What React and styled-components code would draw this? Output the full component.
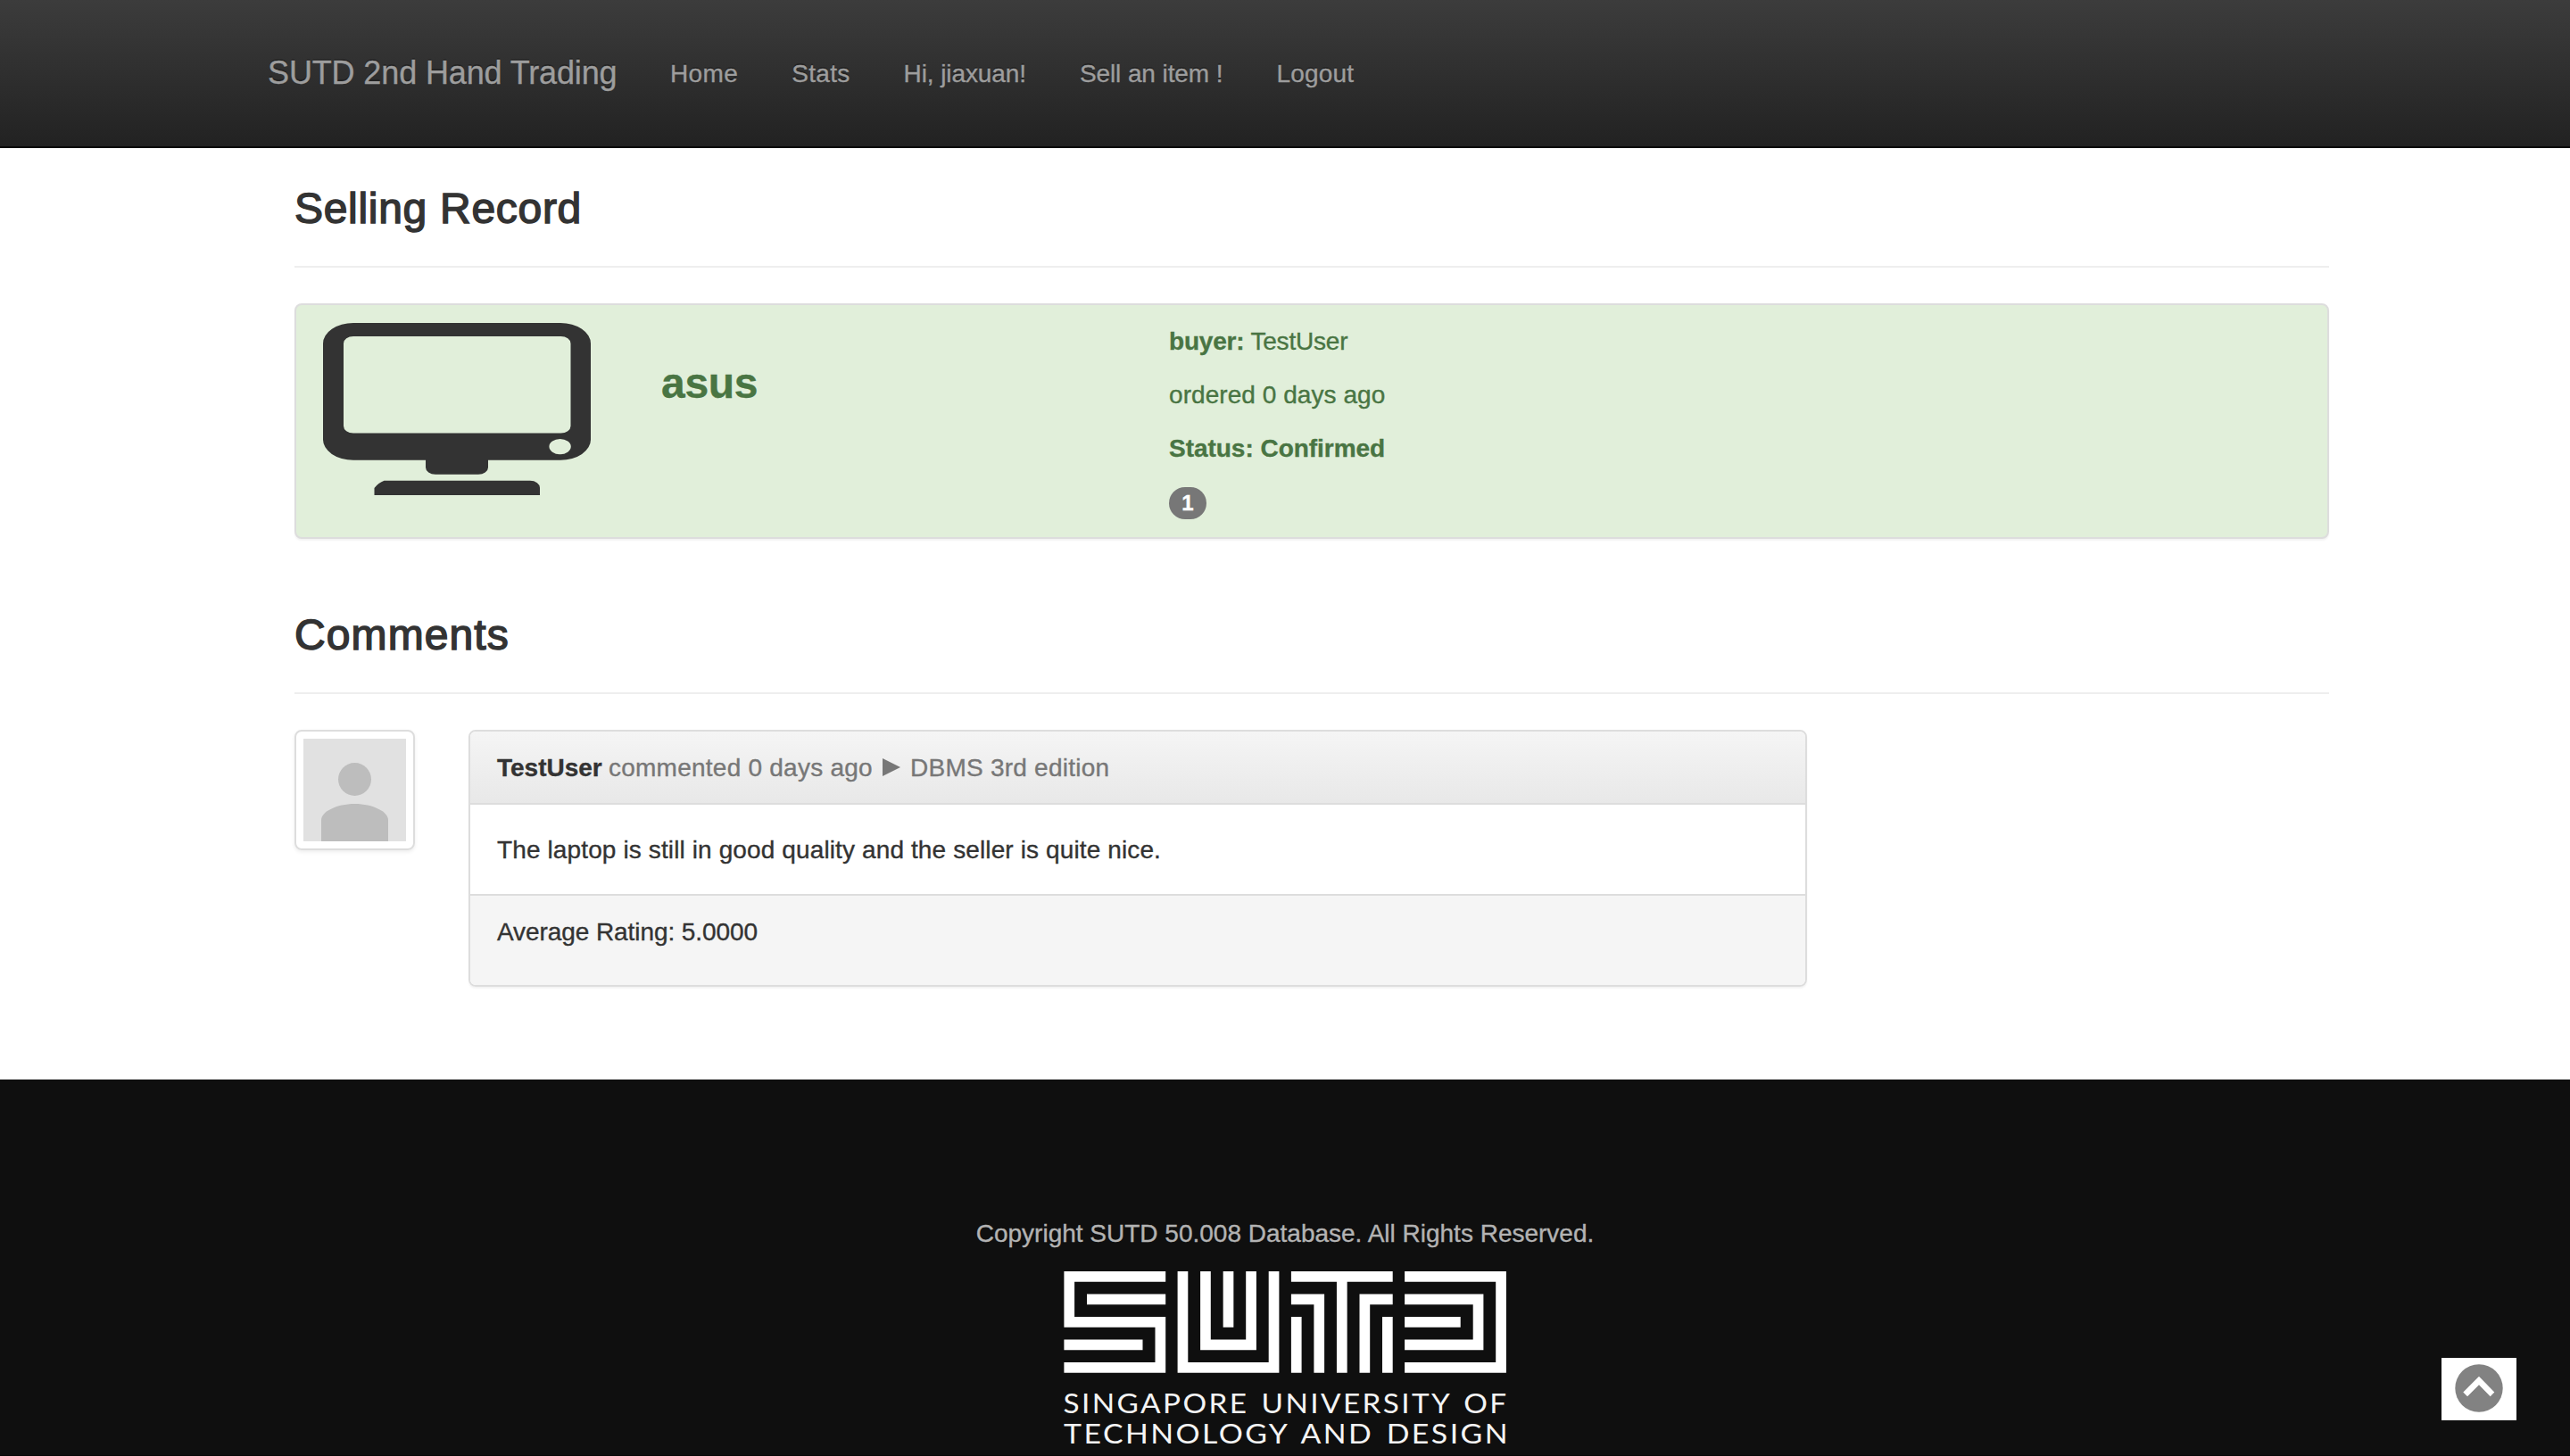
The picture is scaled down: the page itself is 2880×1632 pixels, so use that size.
import React from 'react';
import styled, { createGlobalStyle } from 'styled-components';

const GlobalStyle = createGlobalStyle`
  *, *::before, *::after { box-sizing: border-box; }
  html { background: #0f0f0f; }
  body {
    margin: 0;
    height: 1632px;
    overflow: hidden;
    background: #fff;
    color: #333;
    font: 28px/40px "Helvetica Neue", "Liberation Sans", Arial, sans-serif;
    -webkit-text-stroke: 0.35px currentColor;
  }
  p, h3 { margin: 0; }
`;

const Page = styled.div`
  display: flex;
  flex-direction: column;
  height: 1632px;
`;

const Navbar = styled.nav`
  display: flex;
  flex: none;
  height: 166px;
  padding: 0 270px;
  background: linear-gradient(to bottom, #3c3c3c 0%, #222 100%);
  border-bottom: 2px solid #080808;
`;

const Brand = styled.a`
  width: 451px;
  padding: 62px 0 62px 30px;
  font-size: 36px;
  line-height: 40px;
  white-space: nowrap;
  letter-spacing: -0.13px;
  color: #9d9d9d;
  text-shadow: 0 -2px 0 rgba(0, 0, 0, 0.25);
`;

const NavList = styled.div`
  display: flex;
`;

const NavLink = styled.a`
  padding: 63px 30px 61px;
  letter-spacing: ${(p) => p.$track || 0}px;
  white-space: nowrap;
  color: #9d9d9d;
  text-shadow: 0 -2px 0 rgba(0, 0, 0, 0.25);
`;

const Main = styled.main`
  flex: none;
  height: 1044px;
  width: 2280px;
  margin-left: 330px;
`;

const SectionTitle = styled.h3`
  height: ${(p) => p.$height}px;
  padding-top: ${(p) => p.$top}px;
  border-bottom: 2px solid #eee;
  font-size: 48px;
  line-height: 54px;
  font-weight: 400;
  -webkit-text-stroke: 1.5px #333;
  letter-spacing: ${(p) => p.$track || 0}px;
`;

const RecordCard = styled.section`
  display: grid;
  grid-template-columns: 379px 569px 1fr;
  height: 264px;
  margin-top: 40px;
  padding: 20px 0 0 30px;
  border: 2px solid #ddd;
  border-radius: 8px;
  background: #e1efda;
  color: #497543;
  box-shadow: 0 2px 2px rgba(0, 0, 0, 0.05);
`;

const ItemName = styled.strong`
  padding-top: 41px;
  font-size: 48px;
  line-height: 54px;
  letter-spacing: -0.3px;
`;

const Details = styled.div`
  display: flex;
  flex-direction: column;
  align-items: flex-start;
  gap: 20px;
  padding-top: 1px;
`;

const Line = styled.p`
  letter-spacing: ${(p) => p.$track || 0}px;
`;

const Badge = styled.span`
  width: 42px;
  height: 36px;
  margin-top: 3px;
  border-radius: 20px;
  background: #777;
  color: #fff;
  font-size: 24px;
  font-weight: 700;
  line-height: 36px;
  text-align: center;
`;

const CommentRow = styled.section`
  display: flex;
  align-items: flex-start;
  gap: 60px;
  margin-top: 40px;
`;

const Thumbnail = styled.div`
  display: flex;
  width: 135px;
  height: 135px;
  padding: 8px;
  border: 2px solid #ddd;
  border-radius: 8px;
  box-shadow: 0 2px 4px rgba(0, 0, 0, 0.075);
`;

const Panel = styled.article`
  width: 1500px;
  border: 2px solid #ddd;
  border-radius: 8px;
  overflow: hidden;
  box-shadow: 0 2px 2px rgba(0, 0, 0, 0.05);
`;

const PanelHeading = styled.header`
  display: flex;
  height: 82px;
  padding: 21px 30px 19px;
  border-bottom: 2px solid #ddd;
  background: linear-gradient(to bottom, #f5f5f5 0%, #e8e8e8 100%);
  color: #777;
  white-space: pre;
`;

const Author = styled.strong`
  width: 125px;
  color: #333;
`;

const When = styled.span`
  width: 307px;
  letter-spacing: 0.24px;
`;

const Arrow = styled.svg`
  width: 20px;
  height: 20px;
  margin: 9px 11px 0 0;
`;

const Product = styled.span`
  letter-spacing: 0.24px;
`;

const PanelBody = styled.div`
  height: 100px;
  padding: 31px 30px 29px;
  letter-spacing: 0.12px;
`;

const PanelFooter = styled.footer`
  height: 102px;
  padding: 21px 30px;
  border-top: 2px solid #ddd;
  background: #f5f5f5;
  letter-spacing: -0.08px;
`;

const SiteFooter = styled.footer`
  display: flex;
  flex: 1;
  flex-direction: column;
  align-items: center;
  padding-top: 153px;
  background: #0f0f0f;
  color: #b3b3b3;
  border-bottom: 1px solid #070707;
`;

const Copyright = styled.p`
  white-space: nowrap;
`;

const Logo = styled.svg`
  flex: none;
  width: 500px;
  height: 200px;
  margin-top: 22px;
`;

const LogoText = styled.text`
  font: 400 30.5px Lato, sans-serif;
  letter-spacing: 2.2px;
  word-spacing: 3px;
  -webkit-text-stroke: 0;
  fill: #f4f4f4;
`;

const ToTop = styled.button`
  position: fixed;
  right: 60px;
  bottom: 40px;
  width: 84px;
  height: 70px;
  padding: 0;
  border: 0;
  background: #fff;
`;

const links = [
  { label: 'Home', track: 0.4 },
  { label: 'Stats', track: 0.3 },
  { label: 'Hi, jiaxuan!', track: -0.1 },
  { label: 'Sell an item !', track: -0.1 },
  { label: 'Logout', track: 0.2 },
];

function Monitor() {
  return (
    <svg width="300" height="196" viewBox="0 0 300 196">
      <g fill="#333">
        <path
          fillRule="evenodd"
          d="M34 0H266A34 23 0 0 1 300 23V130.5A34 23 0 0 1 266 153.7H185V162A11 7.700 0 0 1 174 169.700H126A11 7.700 0 0 1 115 162V153.700H34A34 23 0 0 1 0 130.500V23A34 23 0 0 1 34 0ZM34 15A11 8 0 0 0 23 23V115.500A11 8 0 0 0 34 123.500H266.500A11 8 0 0 0 277.500 115.500V23A11 8 0 0 0 266.500 15ZM265.600 130A12.200 8.600 0 0 0 265.600 147.200A12.200 8.600 0 0 0 265.600 130Z"
        />
        <path d="M57.500 193V185Q62 179 68.500 176.700H232A11 8 0 0 1 243 185V193Z" />
      </g>
    </svg>
  );
}

function Avatar() {
  return (
    <svg width="115" height="115" viewBox="0 0 115 115">
      <rect width="115" height="115" fill="#e1e1e1" />
      <circle cx="57.500" cy="45.500" r="18.500" fill="#bdbdbd" />
      <path d="M20 115V91C20 82 37 73 57.500 73S95 82 95 91V115Z" fill="#bdbdbd" />
    </svg>
  );
}

function SutdLogo() {
  return (
    <Logo viewBox="0 0 500 200">
      <g fill="none" stroke="#fff" strokeWidth="11.700">
        <path d="M116.200 5.850H8.250V56.850H110.350V107.850H2.400M28 31.350H116.200M2.400 82.350H90.500" />
        <g transform="translate(127.200 0)">
          <path d="M8.250 0V107.850H110.350V0M33.750 0V82.350H84.850V0M59.300 0V62.800" />
        </g>
        <g transform="translate(254.500 0)">
          <path d="M2.400 5.850H116.200M59.300 5.850V113.700M2.400 31.350H33.750V113.700M116.200 31.350H84.850V113.700M8.250 51V113.700M110.350 51V113.700" />
        </g>
        <g transform="translate(381.700 0)">
          <path d="M2.400 5.850H110.350V107.850H2.400M2.400 31.350H84.850V82.350H2.400M2.400 56.850H65" />
        </g>
      </g>
      <LogoText x="1.500" y="158.700" textLength="499" lengthAdjust="spacingAndGlyphs">SINGAPORE UNIVERSITY OF</LogoText>
      <LogoText x="2" y="192.700" textLength="500" lengthAdjust="spacingAndGlyphs">TECHNOLOGY AND DESIGN</LogoText>
    </Logo>
  );
}

export default function App() {
  return (
    <Page>
      <GlobalStyle />
      <Navbar>
        <Brand>SUTD 2nd Hand Trading</Brand>
        <NavList>
          {links.map((l) => (
            <NavLink key={l.label} $track={l.track}>{l.label}</NavLink>
          ))}
        </NavList>
      </Navbar>
      <Main>
        <SectionTitle $height={134} $top={41} $track={0.7}>Selling Record</SectionTitle>
        <RecordCard>
          <Monitor />
          <ItemName>asus</ItemName>
          <Details>
            <Line $track={-0.2}><b>buyer:</b> TestUser</Line>
            <Line $track={0.06}>ordered 0 days ago</Line>
            <Line $track={-0.03}><b>Status: Confirmed</b></Line>
            <Badge>1</Badge>
          </Details>
        </RecordCard>
        <SectionTitle $height={174} $top={81} $track={1.1}>Comments</SectionTitle>
        <CommentRow>
          <Thumbnail><Avatar /></Thumbnail>
          <Panel>
            <PanelHeading>
              <Author>TestUser</Author>
              <When>commented 0 days ago</When>
              <Arrow viewBox="0 0 20 20"><path d="M0 0L20 10L0 20Z" fill="#777" /></Arrow>
              <Product>DBMS 3rd edition</Product>
            </PanelHeading>
            <PanelBody>The laptop is still in good quality and the seller is quite nice.</PanelBody>
            <PanelFooter>Average Rating: 5.0000</PanelFooter>
          </Panel>
        </CommentRow>
      </Main>
      <SiteFooter>
        <Copyright>Copyright SUTD 50.008 Database. All Rights Reserved.</Copyright>
        <SutdLogo />
      </SiteFooter>
      <ToTop aria-label="Back to top">
        <svg width="84" height="70" viewBox="0 0 84 70">
          <circle cx="42" cy="34" r="26.700" fill="#828282" />
          <path d="M42 20.700L59.300 38.500L54.700 43.300L42 30.300L29 43.300L24.300 38.500Z" fill="#fff" />
        </svg>
      </ToTop>
    </Page>
  );
}
